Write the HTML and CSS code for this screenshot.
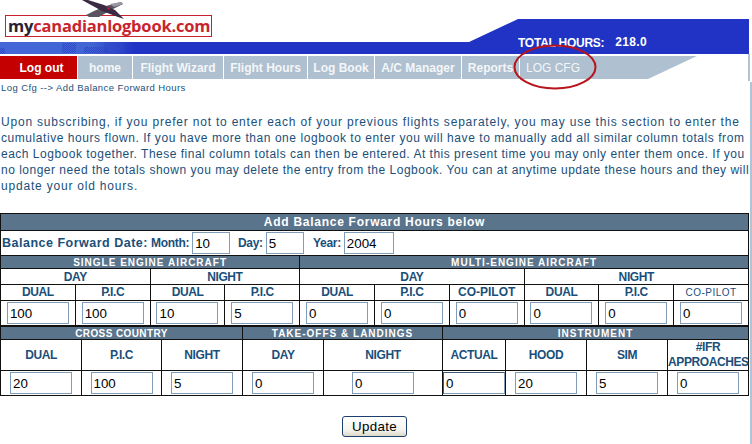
FILE: index.html
```html
<!DOCTYPE html>
<html lang="en">
<head>
<meta charset="utf-8">
<title>Add Balance Forward Hours</title>
<link rel="stylesheet" href="styles.css">
</head>
<body>
<div class="page">
  <header class="masthead">
    <div class="logo">
      <svg class="plane" width="50" height="22" viewBox="0 0 50 22">
        <path class="plane-wing" d="M6 15 L14 11 L26 6 L41 2 L43 4 L31 10 L19 17 L9 17 Z"/>
        <path class="plane-body" d="M2 0 L8 0 L24 5 L35 10 L44 19 L38 17 L22 11 Z"/>
        <path class="plane-light" d="M30 4 L41 2 L43 4 L34 7 Z"/>
        <path class="plane-red" d="M26 7 L30 8 L29 10 Z"/>
      </svg>
      <span class="logo-my">my</span><span class="logo-red">canadianlogbook.com</span>
    </div>
    <div class="band">
      <span class="dither dither-a"></span>
      <span class="dither dither-b"></span>
      <span class="dither dither-c"></span>
      <span class="dither dither-d"></span>
      <span class="total-label">TOTAL HOURS:</span>
      <span class="total-value">218.0</span>
    </div>
  </header>

  <nav class="nav">
    <a class="nav-item nav-logout">Log out</a>
    <a class="nav-item">home</a>
    <a class="nav-item">Flight Wizard</a>
    <a class="nav-item">Flight Hours</a>
    <a class="nav-item">Log Book</a>
    <a class="nav-item">A/C Manager</a>
    <a class="nav-item">Reports</a>
    <a class="nav-item nav-current">LOG CFG</a>
  </nav>
  <svg class="circle" width="90" height="50" viewBox="0 0 90 50"><ellipse cx="45" cy="25" rx="40.5" ry="21.5"/></svg>

  <div class="crumb">Log Cfg --&gt; Add Balance Forward Hours</div>

  <p class="intro"><span class="line line-1">Upon subscribing, if you prefer not to enter each of your previous flights separately, you may use this section to enter the</span> <span class="line line-2">cumulative hours flown. If you have more than one logbook to enter you will have to manually add all similar column totals from</span> <span class="line line-3">each Logbook together. These final column totals can then be entered. At this present time you may only enter them once. If you</span> <span class="line line-4">no longer need the totals shown you may delete the entry from the Logbook. You can at anytime update these hours and they will</span> <span class="line line-5">update your old hours.</span></p>

  <form class="form">
    <table class="grid grid-top">
      <colgroup>
        <col><col><col><col><col><col><col><col><col><col>
      </colgroup>
      <tr class="row-title"><th colspan="10">Add Balance Forward Hours below</th></tr>
      <tr class="row-date">
        <td colspan="10">
          <div class="date">
            <span class="date-main">Balance Forward Date:</span>
            <label class="date-field date-month">Month: <input class="field field-short" value="10"></label>
            <label class="date-field date-day">Day: <input class="field field-short" value="5"></label>
            <label class="date-field date-year">Year: <input class="field field-year" value="2004"></label>
          </div>
        </td>
      </tr>
      <tr class="row-section"><th colspan="4">SINGLE ENGINE AIRCRAFT</th><th colspan="6">MULTI-ENGINE AIRCRAFT</th></tr>
      <tr class="row-sub"><td colspan="2">DAY</td><td colspan="2">NIGHT</td><td colspan="3">DAY</td><td colspan="3">NIGHT</td></tr>
      <tr class="row-label">
        <td>DUAL</td><td>P.I.C</td><td>DUAL</td><td>P.I.C</td><td>DUAL</td><td>P.I.C</td><td class="label-wide">CO-PILOT</td><td>DUAL</td><td>P.I.C</td><td class="label-thin">CO-PILOT</td>
      </tr>
      <tr class="row-input">
        <td><input class="field" value="100"></td><td><input class="field" value="100"></td><td><input class="field" value="10"></td><td><input class="field" value="5"></td><td><input class="field" value="0"></td><td><input class="field" value="0"></td><td><input class="field" value="0"></td><td><input class="field" value="0"></td><td><input class="field" value="0"></td><td><input class="field" value="0"></td>
      </tr>
    </table>
    <table class="grid grid-bottom">
      <colgroup>
        <col class="c81"><col class="c80"><col class="c81"><col class="c81"><col class="c119"><col class="c63"><col class="c81"><col class="c81"><col class="c81">
      </colgroup>
      <tr class="row-section"><th colspan="3" class="section-tight">CROSS COUNTRY</th><th colspan="2">TAKE-OFFS &amp; LANDINGS</th><th colspan="4">INSTRUMENT</th></tr>
      <tr class="row-label row-tall">
        <td>DUAL</td><td>P.I.C</td><td>NIGHT</td><td>DAY</td><td>NIGHT</td><td>ACTUAL</td><td>HOOD</td><td>SIM</td><td>#IFR<br>APPROACHES</td>
      </tr>
      <tr class="row-input">
        <td><input class="field" value="20"></td><td><input class="field" value="100"></td><td><input class="field" value="5"></td><td><input class="field" value="0"></td><td><input class="field" value="0"></td><td class="cell-flush"><input class="field field-inset" value="0"></td><td><input class="field" value="20"></td><td><input class="field" value="5"></td><td><input class="field" value="0"></td>
      </tr>
    </table>
    <div class="actions"><button class="update" type="button">Update</button></div>
  </form>
  <span class="edge edge-upper"></span>
  <span class="edge edge-lower"></span>
</div>
</body>
</html>
```

FILE: styles.css
```css
* { box-sizing: border-box; }
html, body { margin: 0; padding: 0; background: #fff; }
body { font-family: "Liberation Sans", Arial, sans-serif; color: #1a4f7a; overflow: hidden; }
.page { position: relative; width: 752px; height: 444px; overflow: hidden; }

/* masthead */
.masthead { position: relative; height: 56px; padding-top: 19px; }
.logo {
  position: absolute; left: 5px; top: 15px; z-index: 2;
  width: 207px; height: 22px; padding-left: 2px;
  border: 1px solid #c8202c; background: #fff;
  font: bold 16.5px/19px "Open Sans", sans-serif; letter-spacing: -0.2px; white-space: nowrap;
}
.logo-my { color: #2a2233; }
.logo-red { color: #c8242e; }
.plane { position: absolute; left: 74px; top: -16px; }
.plane-body { fill: #3a2a44; }
.plane-wing { fill: #5a5460; }
.plane-light { fill: #9a98a0; }
.plane-red { fill: #c8242e; }

.band {
  position: relative; width: 749px; height: 35px; padding: 13px 0 0 518px;
  display: flex; align-items: center; gap: 11px;
  color: #fff; font-weight: bold; font-size: 12px;
  background: linear-gradient(90deg, #4466d6 0, #4265d4 90px, #2033c4 135px);
  clip-path: polygon(0 23px, 469px 23px, 518px 0, 100% 0, 100% 100%, 0 100%);
}
.total-label { letter-spacing: -0.25px; }
.total-value { letter-spacing: 0.3px; margin-bottom: 2px; }
.dither {
  position: absolute; height: 6px;
  background: repeating-conic-gradient(#2e48c8 0 25%, transparent 0 50%) 0 0 / 2px 2px;
}
.dither-a { left: 62px; top: 24px; width: 14px; height: 10px; }
.dither-b { left: 84px; top: 28px; width: 24px; }
.dither-c { left: 104px; top: 23px; width: 20px; height: 11px; }
.dither-d { left: 0; top: 29px; width: 5px; }

/* nav */
.nav {
  display: grid; height: 23px; width: 697px;
  grid-template-columns: 77px 54px 90px 83px 66px 86px 57px 1fr; gap: 1px;
  clip-path: polygon(0 0, 100% 0, 648px 100%, 0 100%);
  background: #fff;
}
.nav-item {
  display: flex; align-items: center; justify-content: center;
  background: #afc0d1; color: #f4f6f8;
  font-weight: bold; font-size: 12px; letter-spacing: 0; white-space: nowrap;
}
.nav-logout { background: #c40000; color: #fff; padding-left: 6px; }
.nav-current { justify-content: flex-start; padding-left: 6px; font-weight: normal; letter-spacing: 0; }
.circle { position: absolute; left: 510px; top: 42px; }
.circle ellipse { fill: none; stroke: #b8141c; stroke-width: 2; }

.crumb { height: 18px; padding: 3px 0 0 1px; font-size: 9.5px; line-height: 12px; letter-spacing: 0.42px; color: #1a4f7a; }

.intro {
  margin: 0; padding: 17px 0 0 1px; width: 752px; height: 116px;
  font-size: 12px; line-height: 16px; color: #1a4f7a;
}
.line { display: block; white-space: nowrap; letter-spacing: 0.5px; }
.line-1 { letter-spacing: 0.8px; }
.line-2 { letter-spacing: 0.56px; }
.line-5 { letter-spacing: 0.8px; }

/* tables */
.grid { border-collapse: collapse; table-layout: fixed; width: 749px; }
.grid th, .grid td { border: 1px solid #111; padding: 0; text-align: center; vertical-align: middle; }
.grid th { background: #5a748c; color: #fff; }
.c81 { width: 81px; }
.c80 { width: 80px; }
.c119 { width: 119px; }
.c63 { width: 63px; }

.row-title { height: 17px; }
.row-title th { font-size: 12px; line-height: 14px; letter-spacing: 0.73px; }
.grid .row-date td { text-align: left; height: 25px; }
.date { display: flex; align-items: center; height: 23px; padding-left: 1px; font-weight: bold; white-space: nowrap; }
.date-main { font-size: 12.5px; letter-spacing: 0.5px; width: 149px; }
.date-field { display: inline-flex; align-items: center; gap: 3px; font-size: 12px; letter-spacing: -0.3px; }
.date-month { width: 87px; }
.date-day { width: 75px; }
.row-section { height: 13px; }
.row-section th { font-size: 10px; line-height: 11px; letter-spacing: 1px; }
.row-section .section-tight { letter-spacing: 0.4px; }
.row-sub { height: 16px; }
.row-sub td { font-size: 12px; line-height: 14px; font-weight: bold; letter-spacing: -0.4px; }
.row-label { height: 16px; }
.row-label td { font-size: 12px; line-height: 15px; font-weight: bold; letter-spacing: -0.4px; }
.row-label .label-wide { letter-spacing: 0; }
.row-label .label-thin { font-size: 10px; font-weight: normal; letter-spacing: 0.5px; }
.row-tall { height: 31px; }
.row-input { height: 25px; }
.grid-top .row-input td { font-size: 0; }
.grid-bottom .row-input td { font-size: 0; }
.grid .cell-flush { text-align: left; padding-left: 0; }

.field {
  width: 62px; height: 22px; padding: 1px 2px; margin: 0;
  border: 1px solid #7f9db9; background: #fff; color: #000;
  font: 13.33px "Liberation Sans", Arial, sans-serif; letter-spacing: 0; vertical-align: middle;
}
.field-short { width: 38px; }
.field-year { width: 50px; }
.field-inset { border-top-color: #3f5a78; border-left-color: #3f5a78; }

.actions { display: flex; justify-content: center; padding: 20px 3px 0 0; }
.update {
  width: 65px; height: 21px; padding: 0;
  border: 1px solid #1c3f70; border-radius: 3px;
  background: linear-gradient(#ffffff, #f4f3ec 70%, #dcd8c8);
  color: #000; font: 13.33px "Liberation Sans", Arial, sans-serif; letter-spacing: 0.3px;
}
.edge { position: absolute; background: #b0c4d8; }
.edge-upper { left: 748px; top: 54px; width: 2px; height: 27px; }
.edge-lower { left: 750px; top: 82px; width: 2px; height: 362px; }
```
